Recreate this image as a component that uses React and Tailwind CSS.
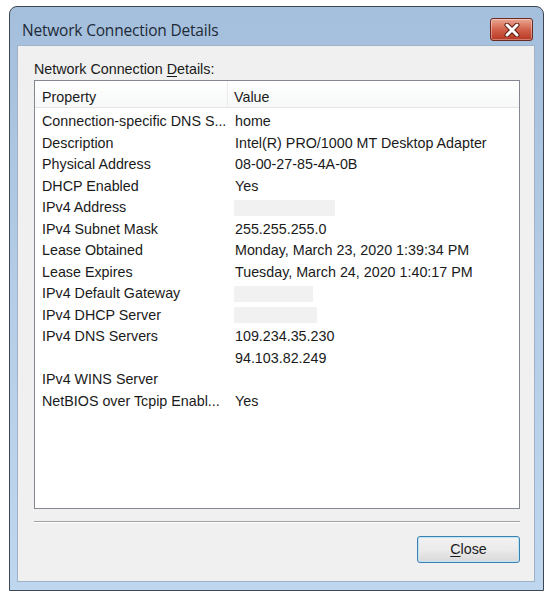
import React from 'react';

const rows = [
  { prop: 'Connection-specific DNS S...', value: 'home' },
  { prop: 'Description', value: 'Intel(R) PRO/1000 MT Desktop Adapter' },
  { prop: 'Physical Address', value: '08-00-27-85-4A-0B' },
  { prop: 'DHCP Enabled', value: 'Yes' },
  { prop: 'IPv4 Address', blank: 'w-[101px]' },
  { prop: 'IPv4 Subnet Mask', value: '255.255.255.0' },
  { prop: 'Lease Obtained', value: 'Monday, March 23, 2020 1:39:34 PM' },
  { prop: 'Lease Expires', value: 'Tuesday, March 24, 2020 1:40:17 PM' },
  { prop: 'IPv4 Default Gateway', blank: 'w-[79px]' },
  { prop: 'IPv4 DHCP Server', blank: 'w-[83px]' },
  { prop: 'IPv4 DNS Servers', value: '109.234.35.230' },
  { prop: '', value: '94.103.82.249' },
  { prop: 'IPv4 WINS Server', value: '' },
  { prop: 'NetBIOS over Tcpip Enabl...', value: 'Yes' },
];

export default function App() {
  return (
    <div className="w-[557px] h-[595px] bg-white overflow-hidden pt-[6px] pl-[9px] font-['Liberation_Sans',Arial,sans-serif] text-[14.3px] text-[#1a1a1a]">
      {/* Window frame */}
      <div className="w-[535px] h-[585px] rounded-t-[8px] border border-[#3d4651] bg-gradient-to-b from-[#a4bfdc] via-[#b5cde6] to-[#bed6ee] flex flex-col">
        {/* Title bar */}
        <div className="h-[38px] flex items-start justify-between pl-[12px] pr-[10px]">
          <span className="mt-[13px] text-[15.5px] leading-[20px] text-[#1e2a38] font-['Segoe_UI','Open_Sans',sans-serif] tracking-[-0.2px]">
            Network Connection Details
          </span>
          <div className="mt-[11px] w-[43px] h-[23px] rounded-[3px] border border-[#6e2a20] bg-gradient-to-b from-[#e9a793] via-[#d2624c] to-[#b63621] flex items-center justify-center shadow-[inset_0_0_0_1px_rgba(255,255,255,0.35)]">
            <svg width="16" height="14" viewBox="0 0 16 14">
              <path d="M3 2 L13 12 M13 2 L3 12" stroke="#5a1d12" strokeWidth="5" strokeLinecap="round" />
              <path d="M3 2 L13 12 M13 2 L3 12" stroke="#ffffff" strokeWidth="3" strokeLinecap="round" />
            </svg>
          </div>
        </div>

        {/* Client area */}
        <div className="ml-[7px] mr-[8px] mb-[8px] flex-1 bg-[#f0f0f0] border border-[#9fb3c8] pl-[16px] pr-[14px] flex flex-col">
          <div className="mt-[13px] h-[20px] leading-[20px]">
            Network Connection <span className="underline underline-offset-2">D</span>etails:
          </div>

          {/* List view */}
          <div className="mt-[1px] w-[486px] h-[429px] bg-white border border-[#828790] flex flex-col">
            <div className="h-[27px] flex border-b border-[#e5e5e5] bg-gradient-to-b from-white to-[#f7f8f9]">
              <div className="w-[193px] pl-[7px] pt-[6px] border-r border-[#ececec]">Property</div>
              <div className="flex-1 pl-[6px] pt-[6px]">Value</div>
            </div>
            <div className="pt-[3px]">
              {rows.map((r, i) => (
                <div key={i} className="h-[21.5px] flex items-center">
                  <div className="w-[193px] pl-[7px] whitespace-nowrap">{r.prop}</div>
                  <div className="flex-1 pl-[7px] whitespace-nowrap">
                    {r.blank ? <div className={`${r.blank} h-[16px] -ml-[1px] bg-[#f1f1f1]`} /> : r.value}
                  </div>
                </div>
              ))}
            </div>
          </div>

          {/* Separator */}
          <div className="mt-[12px] w-[486px] h-[2px] border-t border-[#a0a0a0] border-b border-b-white" />

          {/* Close button */}
          <div className="mt-[13px] flex justify-end">
            <button className="w-[103px] h-[27px] rounded-[3px] border border-[#3c7fb1] bg-gradient-to-b from-[#f2f2f2] via-[#ebebeb] to-[#d9d9d9] shadow-[inset_0_0_0_1px_#bfe6f7] text-[14.3px] text-[#1a1a1a]">
              <span className="underline underline-offset-2">C</span>lose
            </button>
          </div>
        </div>
      </div>
    </div>
  );
}
